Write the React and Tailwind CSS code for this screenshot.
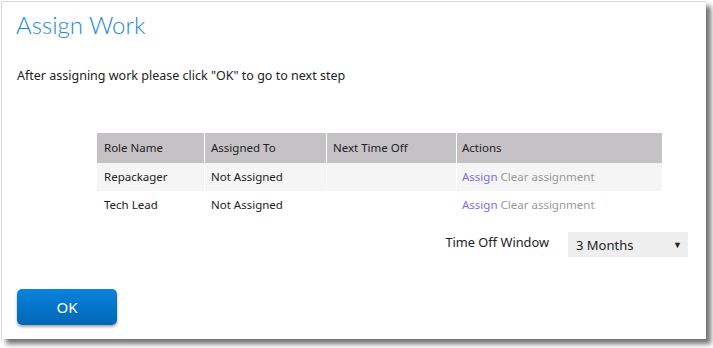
import React from "react";

export default function App() {
  const rows = [
    { role: "Repackager", to: "Not Assigned", bg: "bg-[#f5f5f5]" },
    { role: "Tech Lead", to: "Not Assigned", bg: "bg-white" },
  ];
  return (
    <div className="w-[713px] h-[348px] bg-white relative overflow-hidden" style={{ fontFamily: '"Noto Sans", "Open Sans", sans-serif' }}>
      <div className="absolute left-[1px] top-[1px] w-[705px] h-[338px] bg-white border-l border-t border-[#d8d8d8] shadow-[5px_5px_5px_rgba(0,0,0,0.55)] flex flex-col">
        <div className="pl-[14px] pt-[7px] text-[24px] leading-[32px] text-[#1a8ad6] font-light" style={{ fontFamily: 'Lato, "Noto Sans", sans-serif' }}>
          Assign Work
        </div>
        <div className="pl-[15px] mt-[26px] text-[12.5px] leading-[18px] text-[#222]">
          After assigning work please click "OK" to go to next step
        </div>
        <div className="mt-[48px] ml-[95px] w-[565px] text-[11.5px] text-[#222]">
          <div className="grid grid-cols-[108px_122px_130px_1fr] h-[30px] bg-[#c4c2c4]">
            <div className="px-[7px] flex items-center border-r border-white">Role Name</div>
            <div className="px-[6px] flex items-center border-r border-white">Assigned To</div>
            <div className="px-[6px] flex items-center border-r border-white">Next Time Off</div>
            <div className="px-[5px] flex items-center">Actions</div>
          </div>
          {rows.map((r, i) => (
            <div key={i} className={`grid grid-cols-[108px_122px_130px_1fr] h-[28px] ${r.bg}`}>
              <div className="px-[7px] flex items-center border-r border-white">{r.role}</div>
              <div className="px-[6px] flex items-center border-r border-white">{r.to}</div>
              <div className="px-[6px] flex items-center border-r border-white"></div>
              <div className="px-[5px] flex items-center gap-[3px]">
                <span className="text-[#7b6cf0]">Assign</span>
                <span className="text-[#999]">Clear assignment</span>
              </div>
            </div>
          ))}
        </div>
        <div className="flex items-center justify-end pr-[18px] mt-[13px] text-[#222]">
          <span className="mr-[19px] -mt-[3px] text-[12.8px]">Time Off Window</span>
          <div className="w-[120px] h-[25px] bg-[#eeeeee] flex items-center justify-between pl-[8px] pr-[6px]">
            <span className="text-[13px] mt-[2px]">3 Months</span>
            <span className="text-[9px]">▼</span>
          </div>
        </div>
        <div className="pl-[15px] mt-[32px]">
          <button className="w-[100px] h-[36px] rounded-[5px] bg-gradient-to-b from-[#0a83dc] to-[#0066b6] text-white text-[15px] shadow-[0_2px_3px_rgba(0,0,0,0.35)]">
            OK
          </button>
        </div>
      </div>
    </div>
  );
}
